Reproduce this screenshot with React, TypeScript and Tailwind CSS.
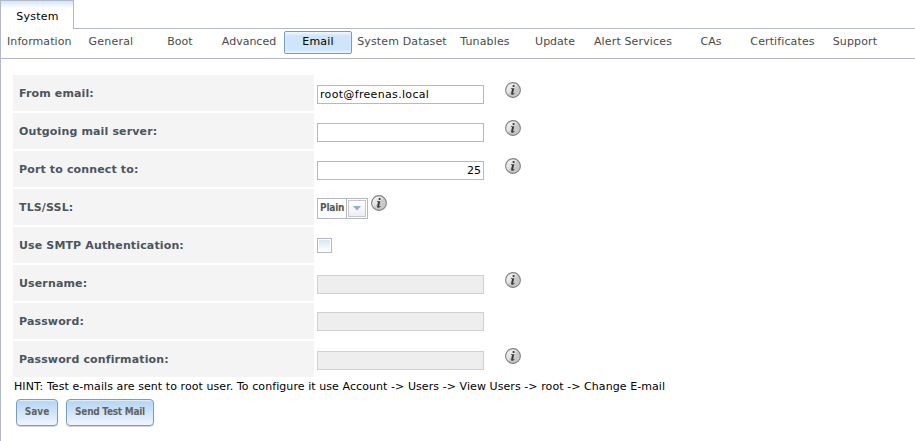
import type { ReactNode } from "react";

const tabs = [
  { label: "Information", cls: "ml-[5px] w-[66px] tracking-[0.08px]" },
  { label: "General", cls: "ml-[6px] w-[66px] tracking-[0.2px]" },
  { label: "Boot", cls: "ml-[3px] w-[66px]" },
  { label: "Advanced", cls: "ml-[3px] w-[66px]" },
  { label: "Email", cls: "ml-[2px] w-[68px] tracking-[0.15px]", active: true },
  { label: "System Dataset", cls: "ml-[4px] w-[92px] tracking-[0.15px]" },
  { label: "Tunables", cls: "ml-[4px] w-[66px] tracking-[0.15px]" },
  { label: "Update", cls: "ml-[4px] w-[66px]" },
  { label: "Alert Services", cls: "ml-[4px] w-[82px] tracking-[0.15px]" },
  { label: "CAs", cls: "ml-[4px] w-[66px]" },
  { label: "Certificates", cls: "ml-[5px] w-[67px] tracking-[0.12px]" },
  { label: "Support", cls: "ml-[6px] w-[66px] tracking-[0.15px]" },
];

function InfoIcon({ className = "" }: { className?: string }) {
  return (
    <svg viewBox="0 0 16 16" className={`block h-4 w-4 shrink-0 ${className}`}>
      <defs>
        <linearGradient id="disc" x1="0.1" y1="0.1" x2="0.9" y2="0.9">
          <stop offset="0" stopColor="#f4f4f4" />
          <stop offset="0.45" stopColor="#e2e2e2" />
          <stop offset="0.5" stopColor="#cbcbcb" />
          <stop offset="1" stopColor="#c6c6c6" />
        </linearGradient>
      </defs>
      <circle cx="8" cy="8" r="7.4" fill="url(#disc)" stroke="#808080" strokeWidth="1.1" />
      <circle cx="8.6" cy="4" r="1.1" fill="#333" />
      <path d="M6 6.2H9.2L8.1 11.2Q8 11.8 9.4 11.1V12Q8 13 6.7 12.7Q5.8 12.4 6.2 11.2L7 7.1H5.9Z" fill="#383838" />
    </svg>
  );
}

function TextBox({ value = "", disabled = false, right = false, className = "mt-[10px]" }: { value?: string; disabled?: boolean; right?: boolean; className?: string }) {
  return (
    <div
      className={`h-[19px] w-[167px] shrink-0 border px-[2px] leading-[17px] whitespace-nowrap ${right ? "text-right" : "tracking-[0.33px]"} ${
        disabled ? "border-[#d0d0d0] bg-[#eeeeee]" : "border-[#b3b7c8] bg-white"
      } ${className}`}
    >
      {value}
    </div>
  );
}

function Row({ label, children }: { label: string; children: ReactNode }) {
  return (
    <div className="flex h-9 items-start">
      <div className="mr-[3px] h-9 w-[301px] shrink-0 bg-[#f4f4f4] pt-[2px] pl-[6px] leading-[34px] font-bold tracking-[0.14px] text-[#4b5560]">{label}</div>
      {children}
    </div>
  );
}

function Button({ children, className }: { children: ReactNode; className: string }) {
  return (
    <div
      className={`h-[27px] rounded-[4px] border border-[#769dc0] bg-linear-to-b from-[#b4d3f2] to-[#eef6fe] text-center font-['DejaVu_Sans_Condensed','DejaVu_Sans',sans-serif] text-[10px] font-bold leading-[24px] whitespace-nowrap text-[#626262] shadow-[0_1px_1px_rgba(0,0,0,0.18),inset_0_1px_1px_#e3f0fc] ${className}`}
    >
      {children}
    </div>
  );
}

export default function App() {
  return (
    <div className="flex h-[441px] w-[915px] flex-col overflow-hidden bg-white font-['DejaVu_Sans',sans-serif] text-[11px] text-black">
      <div className="flex h-[29px] shrink-0">
        <div className="h-[29px] w-[74px] border border-b-0 border-[#b3b7c8] bg-linear-to-b from-[#cfe5fa] to-white to-[7px] pt-[2px] pl-px text-center leading-[28px] tracking-[0.25px]">System</div>
        <div className="flex-1 border-b border-[#b3b7c8]" />
      </div>
      <div className="flex flex-1 flex-col border-l border-[#b3b7c8]">
        <div className="flex h-[30px] shrink-0 items-start border-b border-[#b3b7c8] pt-[2px] leading-[20px] text-[#4a4a4a]">
          {tabs.map((t) => (
            <div
              key={t.label}
              className={`h-[23px] shrink-0 rounded-[2px] border text-center whitespace-nowrap ${
                t.active ? "border-[#769dc0] bg-[#cfe5fa] bg-linear-to-b from-[#f2f8fe] via-[#cfe5fa] via-[4px] to-[#cfe5fa] text-black shadow-[inset_0_-2px_2px_#e8f3fd]" : "border-transparent"
              } ${t.cls}`}
            >
              {t.label}
            </div>
          ))}
        </div>
        <div className="flex flex-col gap-[2px] pt-4 pl-3">
          <Row label="From email:">
            <TextBox value="root@freenas.local" />
            <InfoIcon className="mt-[7px] ml-[21px]" />
          </Row>
          <Row label="Outgoing mail server:">
            <TextBox />
            <InfoIcon className="mt-[7px] ml-[21px]" />
          </Row>
          <Row label="Port to connect to:">
            <TextBox value="25" right />
            <InfoIcon className="mt-[7px] ml-[21px]" />
          </Row>
          <Row label="TLS/SSL:">
            <div className="mt-[9px] flex h-[21px] w-[51px] shrink-0 border border-[#b3b7c8] font-['DejaVu_Sans_Condensed','DejaVu_Sans',sans-serif] text-[10px] font-bold leading-[18px] tracking-[-0.2px] text-[#555]">
              <div className="w-[29px] border-r border-[#b3b7c8] pl-[2px]">Plain</div>
              <div className="m-px flex flex-1 items-start justify-center border border-[#c8c8cc] bg-linear-to-b from-white to-[#eeeeee] pt-[5px]">
                <svg viewBox="0 0 8 5" className="h-[5px] w-2">
                  <path d="M0 0H8L4 4.6Z" fill="#92acd8" />
                </svg>
              </div>
            </div>
            <InfoIcon className="mt-[6px] ml-[3px]" />
          </Row>
          <Row label="Use SMTP Authentication:">
            <div className="mt-[11px] h-[15px] w-[15px] border border-[#b3b7c8] p-px">
              <div className="h-full bg-linear-to-b from-[#d8e7f2] to-white" />
            </div>
          </Row>
          <Row label="Username:">
            <TextBox disabled />
            <InfoIcon className="mt-[7px] ml-[21px]" />
          </Row>
          <Row label="Password:">
            <TextBox disabled className="mt-[9px]" />
          </Row>
          <Row label="Password confirmation:">
            <TextBox disabled />
            <InfoIcon className="mt-[7px] ml-[21px]" />
          </Row>
        </div>
        <div className="h-[22px] pl-[13px] leading-[20px] tracking-[0.075px] whitespace-nowrap">
          HINT: Test e-mails are sent to root user. To configure it use Account -&gt; Users -&gt; View Users -&gt; root -&gt; Change E-mail
        </div>
        <div className="flex gap-2 pl-[15px]">
          <Button className="w-[42px]">Save</Button>
          <Button className="w-[88px] tracking-[-0.26px]">Send Test Mail</Button>
        </div>
      </div>
    </div>
  );
}
